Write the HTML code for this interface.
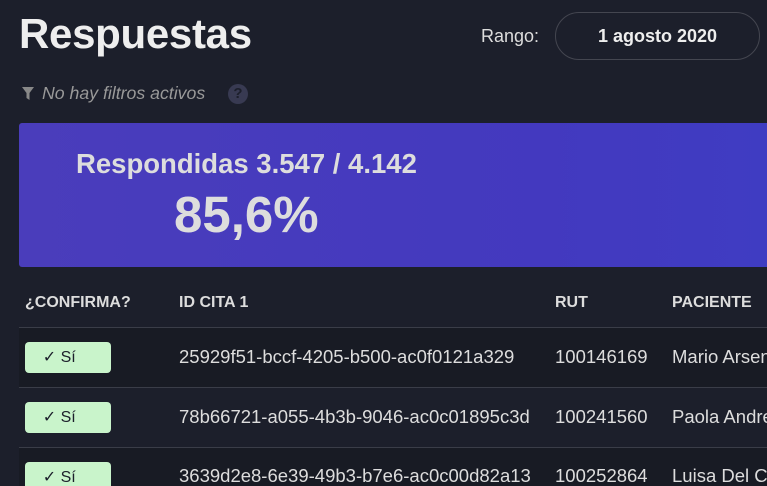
<!DOCTYPE html><html style="width:767px;height:486px;overflow:hidden"><head><style>
body{margin:0;width:767px;height:486px;overflow:hidden;background:#1c1f2b;font-family:"Liberation Sans",sans-serif;color:#e6e6e6;position:relative}
.a{position:absolute;white-space:nowrap}
.row{position:absolute;left:19px;width:748px;height:60px;border-top:1px solid #3a3d48}
.badge{position:absolute;left:25px;width:86px;height:31px;background:#c9f4cb;border-radius:4px;color:#1c1f2b;font-size:16px;line-height:31px}
.c{font-size:18.5px;color:#ddd}
</style></head><body>
<div class="a" style="left:19px;top:10px;font-size:42px;font-weight:bold;color:#eee;letter-spacing:-0.3px">Respuestas</div>
<div class="a" style="left:481px;top:26px;font-size:18px;color:#ddd">Rango:</div>
<div class="a" style="left:555px;top:12px;width:203px;height:46px;border:1px solid #444650;border-radius:24px;text-align:center;line-height:46px;font-size:18px;font-weight:bold;color:#eee">1 agosto 2020</div>
<svg class="a" style="left:22px;top:87px" width="12" height="13" viewBox="0 0 12 13"><path d="M0 0H12L7.5 6V13L4.5 11V6Z" fill="#888"/></svg>
<div class="a" style="left:42px;top:83px;font-size:17.7px;font-style:italic;color:#999">No hay filtros activos</div>
<div class="a" style="left:228px;top:84px;width:20px;height:20px;border-radius:50%;background:#383a52;color:#1c1f2b;font-weight:bold;font-size:15px;text-align:center;line-height:20px">?</div>
<div class="a" style="left:19px;top:123px;width:748px;height:144px;border-radius:3px 0 0 3px;background:linear-gradient(90deg,#4a3dbb,#4339bf 70%,#3f3cc2)"></div>
<div class="a" style="left:76px;top:148px;font-size:27.5px;font-weight:bold;color:#ddd">Respondidas 3.547 / 4.142</div>
<div class="a" style="left:174px;top:185px;font-size:51px;font-weight:bold;color:#ddd">85,6%</div>
<div class="a" style="left:25px;top:294px;font-size:16px;font-weight:bold;color:#ddd">¿CONFIRMA?</div>
<div class="a" style="left:179px;top:294px;font-size:16px;font-weight:bold;color:#ddd">ID CITA 1</div>
<div class="a" style="left:555px;top:294px;font-size:16px;font-weight:bold;color:#ddd">RUT</div>
<div class="a" style="left:672px;top:294px;font-size:16px;font-weight:bold;color:#ddd">PACIENTE</div>
<div class="row" style="top:327px;background:#181b24"></div>
<div class="row" style="top:387px;background:#1c1f2b"></div>
<div class="row" style="top:447px;background:#181b24;height:38px"></div>
<div class="badge" style="top:342px">&nbsp;&nbsp;&nbsp;&nbsp;✓ Sí</div>
<div class="badge" style="top:402px">&nbsp;&nbsp;&nbsp;&nbsp;✓ Sí</div>
<div class="badge" style="top:462px">&nbsp;&nbsp;&nbsp;&nbsp;✓ Sí</div>
<div class="a c" style="left:179px;top:346px">25929f51-bccf-4205-b500-ac0f0121a329</div>
<div class="a c" style="left:555px;top:346px">100146169</div>
<div class="a c" style="left:672px;top:346px">Mario Arsen</div>
<div class="a c" style="left:179px;top:406px">78b66721-a055-4b3b-9046-ac0c01895c3d</div>
<div class="a c" style="left:555px;top:406px">100241560</div>
<div class="a c" style="left:672px;top:406px">Paola Andre</div>
<div class="a c" style="left:179px;top:465px">3639d2e8-6e39-49b3-b7e6-ac0c00d82a13</div>
<div class="a c" style="left:555px;top:465px">100252864</div>
<div class="a c" style="left:672px;top:465px">Luisa Del Ca</div>
</body></html>
